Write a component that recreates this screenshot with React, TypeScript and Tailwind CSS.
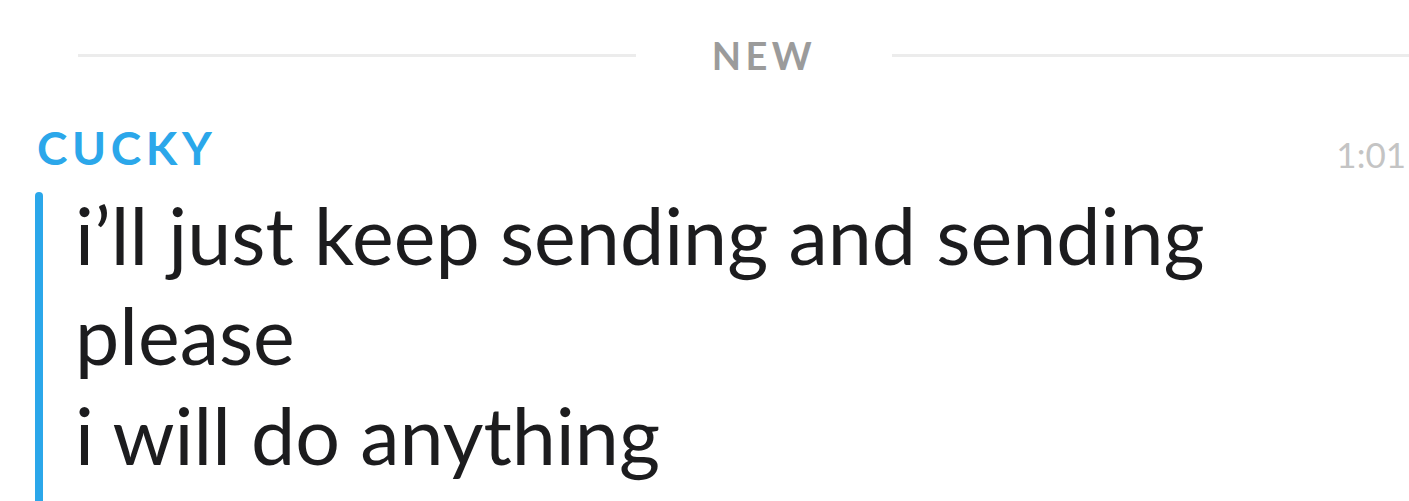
import React from "react";

const messages = ["i’ll just keep sending and sending", "please", "i will do anything"];

const App: React.FC = () => {
    return (
        <div className="w-[1409px] h-[501px] bg-white overflow-hidden flex flex-col font-['Lato',sans-serif]">
            {/* Divider */}
            <div className="flex items-center pl-[78px] pt-[34px]">
                <div className="w-[558px] h-[3px] bg-[#ececec]" />
                <div className="w-[256px] text-center text-[38px] leading-[42px] font-bold tracking-[0.12em] text-[#9b9b9b]">
                    NEW
                </div>
                <div className="flex-1 h-[3px] bg-[#ececec]" />
            </div>

            {/* Header */}
            <div className="flex items-end justify-between pl-[37px] pr-[3px] mt-[47px]">
                <span className="text-[46px] leading-[50px] font-bold tracking-[0.1em] text-[#2ba7ea]">
                    CUCKY
                </span>
                <span className="text-[35px] leading-[38px] text-[#c4c4c4]">1:01</span>
            </div>

            {/* Message */}
            <div className="flex flex-1 mt-[19px] pl-[35px]">
                <div className="w-[8px] rounded-t-full bg-[#2ba7ea]" />
                <div className="pl-[32px] -mt-[7px] text-[79px] leading-[100px] text-[#1c1c1e]">
                    {messages.map((m) => (
                        <div key={m} className="whitespace-nowrap">
                            {m}
                        </div>
                    ))}
                </div>
            </div>
        </div>
    );
};

export default App;
